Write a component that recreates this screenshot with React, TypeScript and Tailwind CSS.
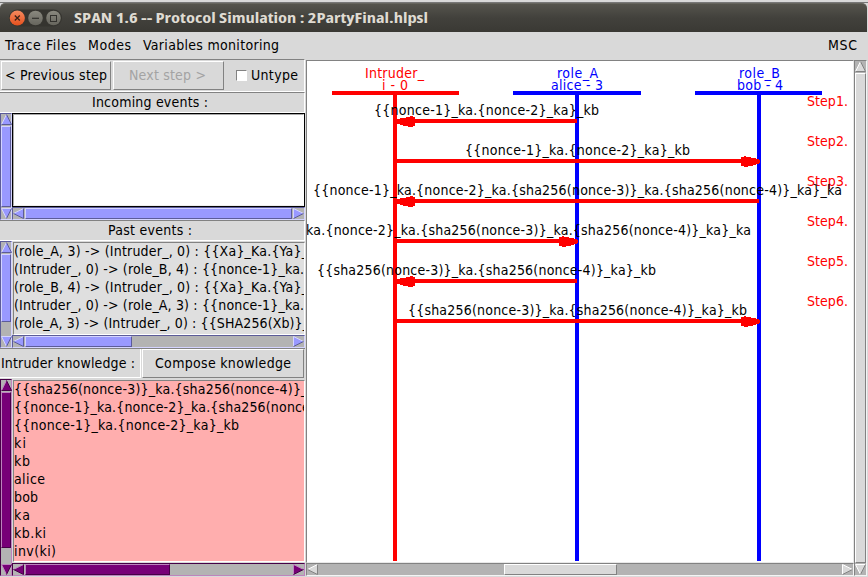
import React from "react";

type Palette = "blue" | "purple" | "gray";
const COLORS = {
  blue: { face: "#9999ff", light: "#d4d4ff", dark: "#5c5c99" },
  purple: { face: "#770077", light: "#bd84bd", dark: "#470047" },
  gray: { face: "#d9d9d9", light: "#ffffff", dark: "#828282" },
};
const TROUGH = {
  blue: "border-t-[#5c5c99] border-l-[#5c5c99] border-b-[#d4d4ff] border-r-[#d4d4ff]",
  purple: "border-t-[#470047] border-l-[#470047] border-b-[#bd84bd] border-r-[#bd84bd]",
  gray: "border-t-[#828282] border-l-[#828282] border-b-[#f4f4f4] border-r-[#f4f4f4]",
};
const THUMB = {
  blue: "bg-[#9999ff] border-t-[#d4d4ff] border-l-[#d4d4ff] border-b-[#5c5c99] border-r-[#5c5c99]",
  purple: "bg-[#770077] border-t-[#bd84bd] border-l-[#bd84bd] border-b-[#470047] border-r-[#470047]",
  gray: "bg-[#d9d9d9] border-t-white border-l-white border-b-[#828282] border-r-[#828282]",
};

function Arrow({ dir, tone }: { dir: "up" | "down" | "left" | "right"; tone: Palette }) {
  const c = COLORS[tone];
  const shape = {
    up: { p: "5.5,0.5 0.5,10.5 10.5,10.5", l: "M5.5 0.5L0.5 10.5", d: "M5.5 0.5L10.5 10.5H0.5" },
    down: { p: "0.5,0.5 10.5,0.5 5.5,10.5", l: "M5.5 10.5L0.5 0.5H10.5", d: "M10.5 0.5L5.5 10.5" },
    left: { p: "0.5,5.5 10.5,0.5 10.5,10.5", l: "M0.5 5.5L10.5 0.5", d: "M10.5 0.5V10.5L0.5 5.5" },
    right: { p: "0.5,0.5 10.5,5.5 0.5,10.5", l: "M0.5 10.5V0.5L10.5 5.5", d: "M10.5 5.5L0.5 10.5" },
  }[dir];
  return (
    <svg width="11" height="11" viewBox="0 0 11 11" className="shrink-0">
      <polygon points={shape.p} fill={c.face} />
      <path d={shape.l} stroke={c.light} fill="none" />
      <path d={shape.d} stroke={c.dark} fill="none" />
    </svg>
  );
}

function VBar({ tone, thumb, className }: { tone: Palette; thumb: string; className: string }) {
  return (
    <div className={`flex shrink-0 flex-col items-center justify-between border bg-[#b3b3b3] ${TROUGH[tone]} ${className}`}>
      <Arrow dir="up" tone={tone} />
      <div className="flex w-full flex-1 flex-col py-px">
        <div className={`w-full border ${THUMB[tone]} ${thumb}`} />
      </div>
      <Arrow dir="down" tone={tone} />
    </div>
  );
}

function HBar({ tone, thumb, className }: { tone: Palette; thumb: string; className: string }) {
  return (
    <div className={`flex shrink-0 items-center justify-between border bg-[#b3b3b3] ${TROUGH[tone]} ${className}`}>
      <Arrow dir="left" tone={tone} />
      <div className="flex h-full flex-1 px-px">
        <div className={`h-full border ${THUMB[tone]} ${thumb}`} />
      </div>
      <Arrow dir="right" tone={tone} />
    </div>
  );
}

function Line({ x = 0, y = 14, w, h = 18, fill = "#000", children }: { x?: number; y?: number; w: number; h?: number; fill?: string; children: string }) {
  return (
    <svg width={w + x} height={h} className="block shrink-0 overflow-visible">
      <text x={x} y={y} textLength={w} lengthAdjust="spacing" fill={fill} className="whitespace-pre">{children}</text>
    </svg>
  );
}

const past: [string, number][] = [
  ["(role_A, 3) -> (Intruder_, 0) : {{Xa}_Ka.{Ya}_", 294],
  ["(Intruder_, 0) -> (role_B, 4) : {{nonce-1}_ka.", 290],
  ["(role_B, 4) -> (Intruder_, 0) : {{Xa}_Ka.{Ya}_", 294],
  ["(Intruder_, 0) -> (role_A, 3) : {{nonce-1}_ka.", 290],
  ["(role_A, 3) -> (Intruder_, 0) : {{SHA256(Xb)}_", 295],
];

const knowledge: [string, number][] = [
  ["{{sha256(nonce-3)}_ka.{sha256(nonce-4)}_ka}_kb", 339],
  ["{{nonce-1}_ka.{nonce-2}_ka.{sha256(nonce-3)}", 322],
  ["{{nonce-1}_ka.{nonce-2}_ka}_kb", 225],
  ["ki", 12],
  ["kb", 16],
  ["alice", 31],
  ["bob", 24],
  ["ka", 16],
  ["kb.ki", 32],
  ["inv(ki)", 42],
];

const messages = [
  { t: "{{nonce-1}_ka.{nonce-2}_ka}_kb", x: 374, w: 225, from: 577, to: 395 },
  { t: "{{nonce-1}_ka.{nonce-2}_ka}_kb", x: 465, w: 225, from: 395, to: 759 },
  { t: "{{nonce-1}_ka.{nonce-2}_ka.{sha256(nonce-3)}_ka.{sha256(nonce-4)}_ka}_ka", x: 313, w: 529, from: 759, to: 395 },
  { t: "ka.{nonce-2}_ka.{sha256(nonce-3)}_ka.{sha256(nonce-4)}_ka}_ka", x: 306, w: 445, from: 395, to: 577 },
  { t: "{{sha256(nonce-3)}_ka.{sha256(nonce-4)}_ka}_kb", x: 317, w: 339, from: 577, to: 395 },
  { t: "{{sha256(nonce-3)}_ka.{sha256(nonce-4)}_ka}_kb", x: 408, w: 339, from: 395, to: 759 },
];

const roles = [
  { name: "Intruder_", id: "i - 0", x: 395, bar: 332, bw: 127, nx: 365, nw: 59, ix: 382, iw: 26, c: "#ff0000" },
  { name: "role_A", id: "alice - 3", x: 577, bar: 513, bw: 128, nx: 557, nw: 41, ix: 551, iw: 52, c: "#0000ff" },
  { name: "role_B", id: "bob - 4", x: 759, bar: 695, bw: 127, nx: 739, nw: 41, ix: 737, iw: 46, c: "#0000ff" },
];

function Chart() {
  return (
    <svg width="545" height="500" viewBox="307 61 545 500" className="block">
      {roles.map((r) => (
        <g key={r.name} fill={r.c}>
          <rect x={r.bar} y="91" width={r.bw} height="4" />
          <rect x={r.x - 2} y="91" width="4" height="470" />
          <text x={r.nx} y="78" textLength={r.nw}>{r.name}</text>
          <text x={r.ix} y="90" textLength={r.iw}>{r.id}</text>
        </g>
      ))}
      {messages.map((m, i) => {
        const y = 121 + i * 40;
        const left = m.to < m.from;
        const s = left ? 1 : -1;
        const tip = m.to + 1;
        return (
          <g key={i} fill="#ff0000">
            <rect x={Math.min(m.from, m.to)} y={y - 2} width={Math.abs(m.from - m.to)} height="4" />
            <polygon
              shapeRendering="crispEdges"
              points={`${tip},${y - 1} ${tip + s * 5},${y - 3} ${tip + s * 14},${y - 4} ${tip + s * 14},${y - 5} ${tip + s * 19},${y - 4} ${tip + s * 19},${y + 5} ${tip + s * 14},${y + 6} ${tip + s * 5},${y + 4} ${tip},${y + 2}`}
            />
            <text x="807" y={y - 15} textLength="41">{`Step${i + 1}.`}</text>
          </g>
        );
      })}
      {messages.map((m, i) => (
        <text key={i} x={m.x} y={115 + i * 40} textLength={m.w} fill="#000">{m.t}</text>
      ))}
    </svg>
  );
}

function TitleBar() {
  return (
    <div className="flex h-[29px] w-[867px] shrink-0 items-center rounded-t-[5px] border-t border-[#66655e] bg-linear-to-b from-[#55544d] via-[#42413c] via-50% to-[#3a3934] pl-[9px]">
      <svg width="54" height="20" viewBox="9 7 54 20" className="block shrink-0">
        <defs>
          <linearGradient id="close" x1="0" y1="0" x2="0" y2="1">
            <stop offset="0" stopColor="#f68b60" />
            <stop offset="1" stopColor="#e5501d" />
          </linearGradient>
          <linearGradient id="round" x1="0" y1="0" x2="0" y2="1">
            <stop offset="0" stopColor="#8a897f" />
            <stop offset="1" stopColor="#66655d" />
          </linearGradient>
        </defs>
        <rect x="9" y="8.5" width="53" height="17" rx="8.5" fill="#35342f" />
        <circle cx="17.3" cy="17" r="7.6" fill="url(#close)" />
        <circle cx="35.5" cy="17" r="7.3" fill="url(#round)" />
        <circle cx="53.5" cy="17" r="7.3" fill="url(#round)" />
        <path d="M14.8 14.5L19.8 19.5M19.8 14.5L14.8 19.5" stroke="#3c2118" strokeWidth="1.3" />
        <path d="M32 17.3H39" stroke="#32312d" strokeWidth="1.2" />
        <rect x="50.5" y="14.5" width="6" height="6" fill="none" stroke="#32312d" />
      </svg>
      <div className="pl-[11px] text-[15px] font-bold font-[Open_Sans,Noto_Sans,sans-serif]">
        <svg width="355" height="20" className="block overflow-visible">
          <text x="0" y="15" textLength="354" lengthAdjust="spacingAndGlyphs" fill="#dfdbd2">SPAN 1.6 -- Protocol Simulation : 2PartyFinal.hlpsl</text>
        </svg>
      </div>
    </div>
  );
}

const raised = "border border-t-white border-l-white border-b-[#828282] border-r-[#828282]";
const frame = "border-t border-r border-b border-t-[#828282] border-r-white border-b-white";

export default function App() {
  return (
    <div className="flex h-[577px] w-[868px] flex-col overflow-hidden bg-[#d9d9d9] text-[14px] leading-[18px] text-black [font-family:'DejaVu_Sans_Condensed','DejaVu_Sans',sans-serif] [font-stretch:condensed]">
      <div className="h-[3px] shrink-0 border-b border-[#777]" />
      <TitleBar />
      <div className="flex min-h-0 flex-1">
        <div className="flex w-[305px] shrink-0 flex-col">
          <nav className="flex h-[27px] shrink-0 pt-1 pl-[5px]">
            <Line w={71}>Trace Files</Line>
            <div className="w-3" />
            <Line w={43}>Modes</Line>
            <div className="w-3" />
            <Line w={136}>Variables monitoring</Line>
          </nav>
          <div className={`flex h-[33px] shrink-0 items-center ${frame}`}>
            <div className={`ml-px flex h-[29px] w-[110px] pt-1 pl-[3px] ${raised}`}>
              <Line w={102}>{"< Previous step"}</Line>
            </div>
            <div className={`ml-[2px] flex h-[29px] w-[111px] pt-1 pl-[15px] ${raised}`}>
              <Line w={77} fill="#a3a3a3">{"Next step >"}</Line>
            </div>
            <div className="ml-3 h-[11px] w-[11px] border border-t-[#828282] border-l-[#828282] border-r-white border-b-white bg-white" />
            <div className="ml-[4px]"><Line w={47} y={13}>Untype</Line></div>
          </div>
          <div className={`flex h-[21px] shrink-0 pl-[92px] ${frame}`}>
            <Line w={116}>Incoming events :</Line>
          </div>
          <div className="flex h-[107px] shrink-0">
            <VBar tone="blue" className="w-[12px]" thumb="h-full" />
            <div className="flex flex-1 flex-col">
              <div className="h-[94px] border border-black bg-white">
                <div className="h-full border border-t-[#aaa] border-l-[#aaa] border-r-white border-b-[#eee]" />
              </div>
              <HBar tone="blue" className="h-[13px]" thumb="w-full" />
            </div>
          </div>
          <div className={`flex h-[21px] shrink-0 pl-[108px] ${frame}`}>
            <Line w={84}>Past events :</Line>
          </div>
          <div className="flex h-[107px] shrink-0">
            <VBar tone="blue" className="w-[12px]" thumb="h-[68px]" />
            <div className="flex min-w-0 flex-1 flex-col">
              <div className="mt-px ml-[1px] h-[93px] overflow-hidden border border-t-[#828282] border-l-[#828282] border-r-white border-b-white bg-[#dfdfdf]">
                {past.map(([t, w], i) => <Line key={i} w={w} y={13}>{t}</Line>)}
              </div>
              <HBar tone="blue" className="h-[13px]" thumb="w-[107px]" />
            </div>
          </div>
          <div className="flex h-[31px] shrink-0 border-t border-[#828282]">
            <div className="flex h-[29px] w-[141px] border-r border-b border-white pt-[5px] pl-px">
              <Line w={134}>Intruder knowledge :</Line>
            </div>
            <div className={`ml-px flex h-[29px] w-[162px] pt-1 pl-3 ${raised}`}>
              <Line w={136}>Compose knowledge</Line>
            </div>
          </div>
          <div className="flex h-[197px] shrink-0">
            <VBar tone="purple" className="w-[12px]" thumb="h-[156px]" />
            <div className="flex min-w-0 flex-1 flex-col">
              <div className="mt-px mb-[1px] ml-px h-[182px] overflow-hidden border border-t-[#828282] border-l-[#828282] border-r-white border-b-white bg-[#ffaeae]">
                {knowledge.map(([t, w], i) => <Line key={i} w={w} y={13}>{t}</Line>)}
              </div>
              <HBar tone="purple" className="h-[13px]" thumb="w-[145px]" />
            </div>
          </div>
        </div>
        <div className="flex flex-1 flex-col">
          <div className="flex h-[28px] shrink-0 justify-end pt-1 pr-[11px]">
            <Line w={29}>MSC</Line>
          </div>
          <div className="flex flex-1 pl-px">
            <div className="flex w-[548px] shrink-0 flex-col">
              <div className="h-[503px] border-t border-r border-b border-l border-t-[#828282] border-l-[#828282] border-r-[#e8e8e8] border-b-[#e8e8e8] bg-white">
                <Chart />
              </div>
              <HBar tone="gray" className="h-[13px]" thumb="ml-[185px] w-[113px]" />
            </div>
            <VBar tone="gray" className="h-[516px] w-[13px]" thumb="h-full" />
          </div>
        </div>
      </div>
    </div>
  );
}
